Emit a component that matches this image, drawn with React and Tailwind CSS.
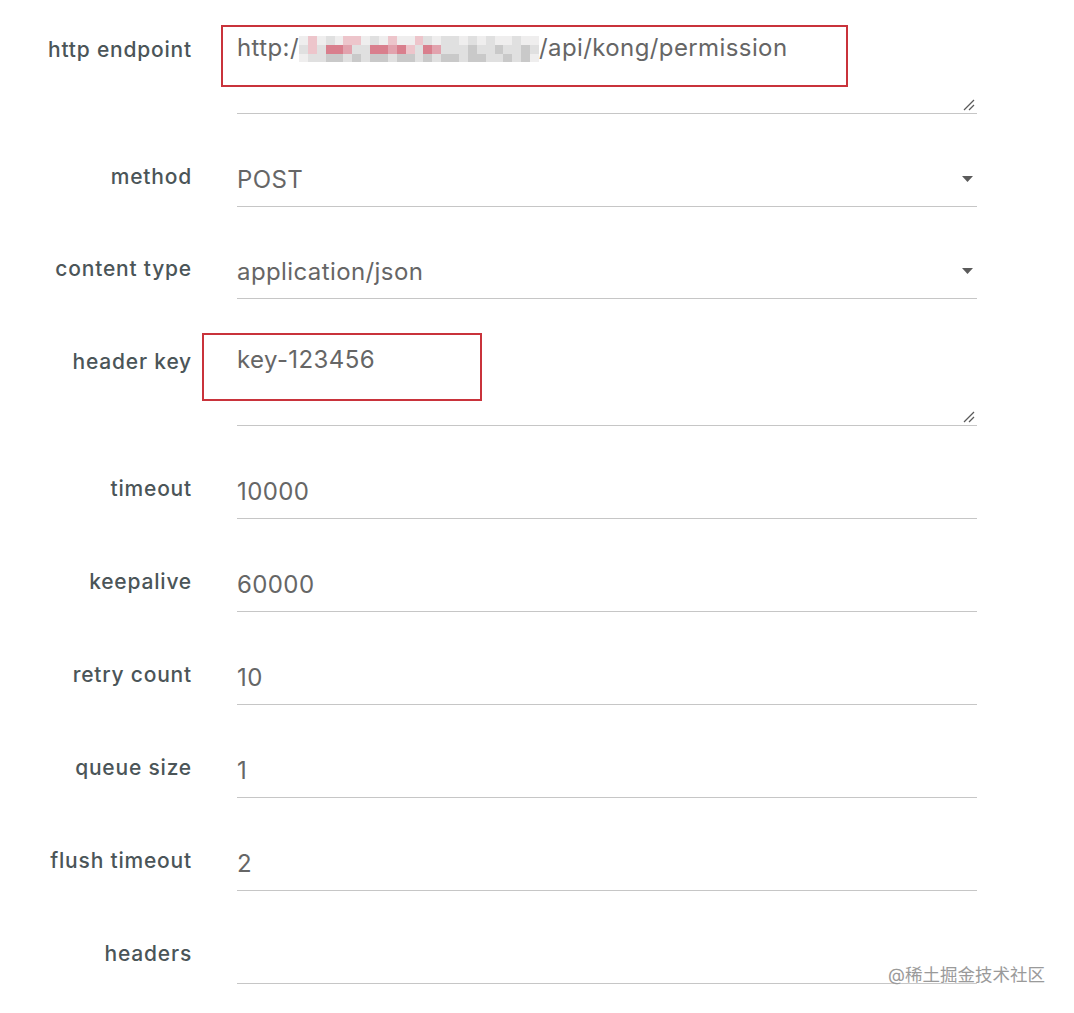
import React from 'react'

const font = { fontFamily: 'Inter, "Noto Sans CJK SC", sans-serif' }

// mosaic used to hide the host part of the URL
const mosaicColors = {
  W: 'bg-[#efeeee]',
  L: 'bg-[#e0e0e0]',
  G: 'bg-[#c9c9c9]',
  P: 'bg-[#edc5cb]',
  D: 'bg-[#e2a3ae]',
  R: 'bg-[#d97f8d]',
}
const mosaic = [
  'WPWLWPPWLWPWWPLWLLWLWLWWLWW',
  'LPLRRDLLRRDRPLRDLLLGLLGLLGL',
  'WLLGGLGLGGLGGLGLGGLGGLLGLGW',
]

function Mosaic() {
  return (
    <span className="inline-flex flex-col align-middle w-[240px] h-[26px] blur-[0.6px]">
      {mosaic.map((row, i) => (
        <span key={i} className="flex flex-1">
          {row.split('').map((c, j) => (
            <span key={j} className={'flex-1 ' + mosaicColors[c]} />
          ))}
        </span>
      ))}
    </span>
  )
}

function ResizeHandle() {
  return (
    <svg className="absolute right-[2px] bottom-[2px]" width="12" height="12" viewBox="0 0 12 12">
      <line x1="11" y1="1" x2="1" y2="11" stroke="#5a5a5a" strokeWidth="1.2" />
      <line x1="11" y1="6" x2="6" y2="11" stroke="#5a5a5a" strokeWidth="1.2" />
    </svg>
  )
}

function Caret() {
  return (
    <svg className="absolute right-[4px] top-[20px]" width="11" height="6" viewBox="0 0 11 6">
      <polygon points="0,0 11,0 5.5,6" fill="#5b5b5b" />
    </svg>
  )
}

function Row({ label, kind = 'input', className = '', children }) {
  const tall = kind === 'textarea'
  return (
    <div className={'flex items-start ' + className}>
      <div className="w-[192px] shrink-0 text-right text-[21px] leading-[28px] font-[450] text-[#4b5558] mt-[7px] tracking-[0.8px] whitespace-nowrap">
        {label}
      </div>
      <div
        className={
          'relative ml-[45px] w-[740px] border-b border-[#c6c6c6] text-[24px] leading-[32px] tracking-[0.4px] text-[#666] whitespace-nowrap ' +
          (tall ? 'h-[85px] pt-[3px]' : 'h-[51px] pt-[8px]')
        }
      >
        {children}
        {kind === 'textarea' && <ResizeHandle />}
        {kind === 'select' && <Caret />}
      </div>
    </div>
  )
}

export default function App() {
  return (
    <div className="relative w-[1074px] min-h-[1013px] bg-white overflow-hidden" style={font}>
      <div className="pt-[29px]">
        <Row label="http endpoint" kind="textarea">
          <span>http:/</span>
          <Mosaic />
          <span>/api/kong/permission</span>
        </Row>
        <Row label="method" kind="select" className="mt-[42px]">POST</Row>
        <Row label="content type" kind="select" className="mt-[41px]">application/json</Row>
        <Row label="header key" kind="textarea" className="mt-[42px]">key-123456</Row>
        <Row label="timeout" className="mt-[42px]">10000</Row>
        <Row label="keepalive" className="mt-[42px]">60000</Row>
        <Row label="retry count" className="mt-[42px]">10</Row>
        <Row label="queue size" className="mt-[42px]">1</Row>
        <Row label="flush timeout" className="mt-[42px]">2</Row>
        <Row label="headers" className="mt-[42px]"></Row>
      </div>

      {/* annotation boxes */}
      <div className="absolute left-[221px] top-[25px] w-[627px] h-[62px] border-2 border-[#c9333b]" />
      <div className="absolute left-[202px] top-[333px] w-[280px] h-[68px] border-2 border-[#c9333b]" />

      {/* watermark */}
      <div className="absolute left-[888px] top-[963px] text-[17.5px] leading-[24px] text-[#9a9a9a] [text-shadow:0_0_2px_#fff]">
        @稀土掘金技术社区
      </div>
    </div>
  )
}
